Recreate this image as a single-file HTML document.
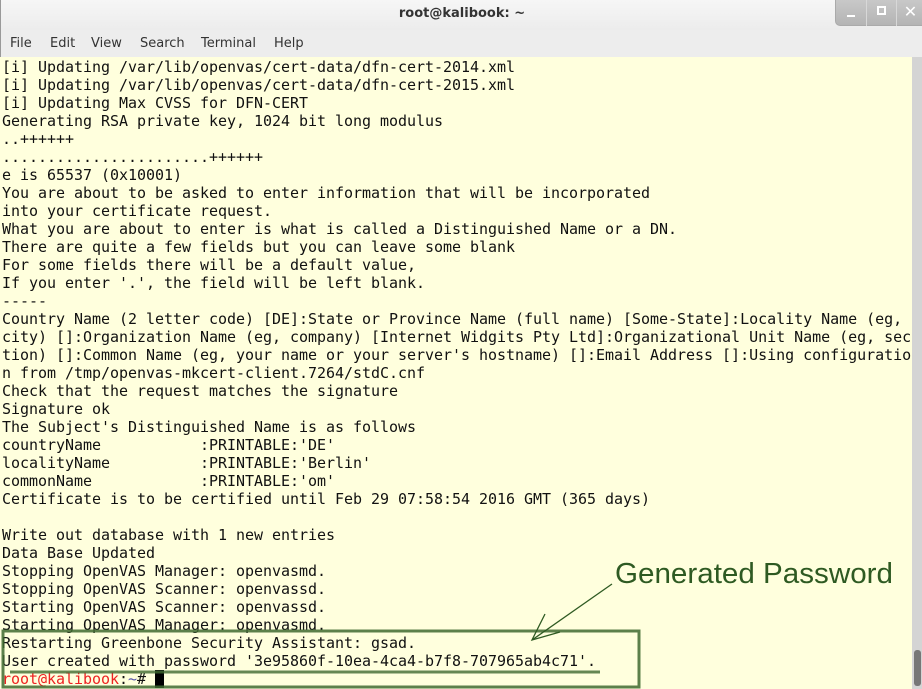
<!DOCTYPE html>
<html><head><meta charset="utf-8"><style>
*{margin:0;padding:0;box-sizing:border-box}
body{width:922px;height:689px;overflow:hidden;background:#ffffdd;position:relative;font-family:"DejaVu Sans",sans-serif}
#title{position:absolute;left:0;top:0;width:922px;height:30px;background:linear-gradient(#f6f6f6,#ececec);border-left:1px solid #999}
#title span{position:absolute;left:0;width:922px;top:6px;text-align:center;font-weight:bold;font-size:13px;color:#333}
#btns{position:absolute;left:834px;top:0;width:88px;height:26px;background:linear-gradient(#c8c8c8,#b4b4b4);border-radius:0 0 0 5px;border:1px solid #aaa;border-top:none}
#btns div{position:absolute;top:0;height:26px;border-left:1px solid #d8d8d8}
#menu{position:absolute;left:0;top:30px;width:922px;height:27px;background:#ededed;border-left:1px solid #999;font-size:13px;color:#333}
#menu span{position:absolute;top:6px}
#term{position:absolute;left:2px;top:58px;font-family:"DejaVu Sans Mono",monospace;font-size:15px;line-height:18px;white-space:pre;color:#111;letter-spacing:-0.03px}
#sb{position:absolute;left:912px;top:57px;width:10px;height:632px;background:#d4d4d4}
#thumb{position:absolute;left:914px;top:650px;width:7px;height:36px;background:#777;border-radius:3px}
.r{color:#e22}.b{color:#55a}
</style></head><body>
<div id="title"><span>root@kalibook: ~</span>
<div id="btns">
<div style="left:0;border-left:none;width:30px"><div style="position:absolute;left:11px;top:15px;width:8px;height:2px;background:#fff;border:none"></div></div>
<div style="left:30px;width:30px"><div style="position:absolute;left:10px;top:6px;width:9px;height:9px;border:2px solid #fff"></div></div>
<div style="left:60px;width:28px;color:#fff;font-size:16px;font-weight:bold;text-align:center;line-height:24px;border-left:1px solid #d8d8d8">✕</div>
</div></div>
<div id="menu"><span style="left:9px">File</span><span style="left:49px">Edit</span><span style="left:90px">View</span><span style="left:139px">Search</span><span style="left:200px">Terminal</span><span style="left:273px">Help</span></div>
<div id="term">[i] Updating /var/lib/openvas/cert-data/dfn-cert-2014.xml
[i] Updating /var/lib/openvas/cert-data/dfn-cert-2015.xml
[i] Updating Max CVSS for DFN-CERT
Generating RSA private key, 1024 bit long modulus
..++++++
.......................++++++
e is 65537 (0x10001)
You are about to be asked to enter information that will be incorporated
into your certificate request.
What you are about to enter is what is called a Distinguished Name or a DN.
There are quite a few fields but you can leave some blank
For some fields there will be a default value,
If you enter '.', the field will be left blank.
-----
Country Name (2 letter code) [DE]:State or Province Name (full name) [Some-State]:Locality Name (eg,
city) []:Organization Name (eg, company) [Internet Widgits Pty Ltd]:Organizational Unit Name (eg, sec
tion) []:Common Name (eg, your name or your server's hostname) []:Email Address []:Using configuratio
n from /tmp/openvas-mkcert-client.7264/stdC.cnf
Check that the request matches the signature
Signature ok
The Subject's Distinguished Name is as follows
countryName           :PRINTABLE:'DE'
localityName          :PRINTABLE:'Berlin'
commonName            :PRINTABLE:'om'
Certificate is to be certified until Feb 29 07:58:54 2016 GMT (365 days)

Write out database with 1 new entries
Data Base Updated
Stopping OpenVAS Manager: openvasmd.
Stopping OpenVAS Scanner: openvassd.
Starting OpenVAS Scanner: openvassd.
Starting OpenVAS Manager: openvasmd.
Restarting Greenbone Security Assistant: gsad.
User created with password '3e95860f-10ea-4ca4-b7f8-707965ab4c71'.
<span class="r">root@kalibook</span>:<span class="b">~</span># <span style="background:#000">&nbsp;</span></div>
<div id="sb"></div><div id="thumb"></div>
<svg style="position:absolute;left:0;top:0" width="922" height="689">
<rect x="3" y="631" width="636" height="56" fill="none" stroke="#3f6a30" stroke-width="3" opacity="0.85"/>
<line x1="10" y1="672" x2="600" y2="672" stroke="#3f6a30" stroke-width="3" opacity="0.8"/>
<line x1="612" y1="584" x2="532" y2="640" stroke="#2e5a22" stroke-width="1.3"/>
<polyline points="545,614 532,640 560,632" fill="none" stroke="#2e5a22" stroke-width="1.3"/>
<text x="615" y="583" font-family="Liberation Sans Narrow, Liberation Sans, sans-serif" font-size="29" fill="#2e5a22" textLength="278" lengthAdjust="spacingAndGlyphs">Generated Password</text>
</svg>
</body></html>
